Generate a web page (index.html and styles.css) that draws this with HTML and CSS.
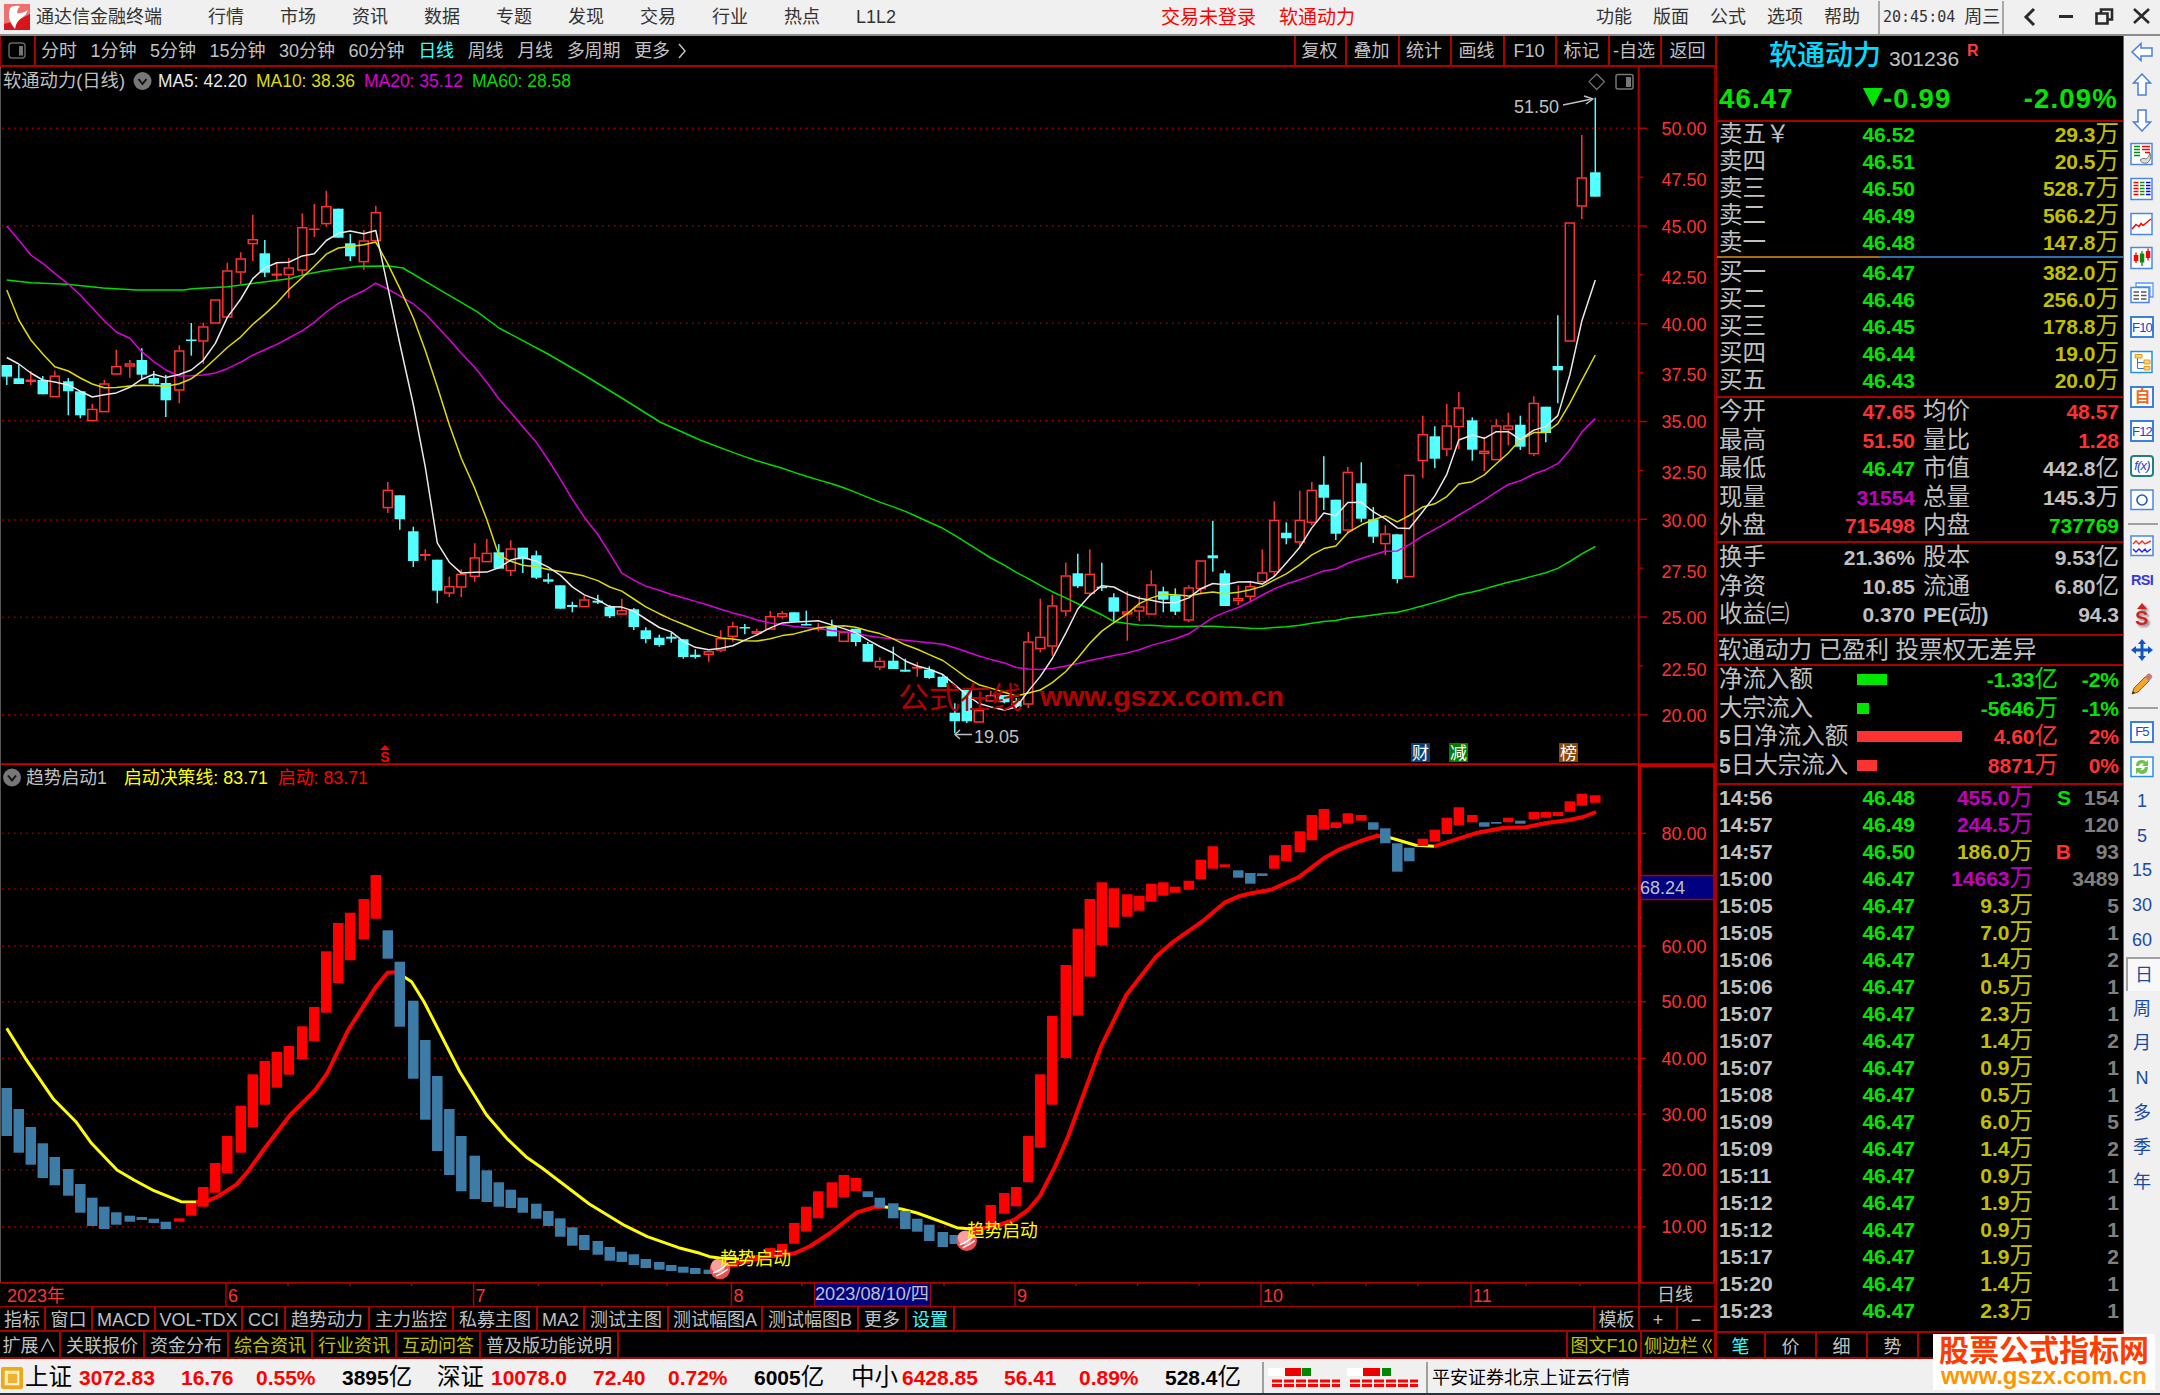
FILE: index.html
```html
<!DOCTYPE html>
<html lang="zh-CN">
<head>
    <meta charset="UTF-8">
    <title>通达信金融终端</title>
    <link rel="stylesheet" href="styles.css">
</head>
<body>
    <header class="titlebar">
        <svg class="logo" width="26" height="26" viewBox="0 0 26 26">
            <rect width="26" height="26" fill="#d8141c"/>
            <path d="M0 0H26V10Q16 16 0 20Z" fill="#f07070"/>
            <path d="M6 4Q3 14 8 21L11 25Q12 17 19 13Q23 10 24 6Q17 10 13 9Q13 5 16 2Q9 1 6 4Z" fill="#fff"/>
        </svg>
        <span class="app-name">通达信金融终端</span>
        <nav class="menu">
            <span>行情</span><span>市场</span><span>资讯</span><span>数据</span><span>专题</span><span>发现</span><span>交易</span><span>行业</span><span>热点</span><span>L1L2</span>
        </nav>
        <div class="login"><span>交易未登录</span><span>软通动力</span></div>
        <nav class="menu-right">
            <span>功能</span><span>版面</span><span>公式</span><span>选项</span><span>帮助</span>
        </nav>
        <div class="clock"><span class="time">20:45:04</span><span>周三</span></div>
        <svg class="window-buttons" width="156" height="34" viewBox="0 0 156 34" fill="none" stroke="#2a2a2a" stroke-width="3">
            <path d="M30 9L22 17L30 25"/>
            <path d="M55 16.5H69"/>
            <path d="M92.500 13.500H103.500V23.500H92.500ZM97 13V9.500H108V19.500H104" stroke-width="2.600"/>
            <path d="M130 9L145 23M145 9L130 23" stroke-width="2.600"/>
        </svg>
    </header>

    <main class="workspace">
        <section class="charts">
            <nav class="toolbar">
                <div class="pane-toggle">
                    <svg width="18" height="18" viewBox="0 0 18 18"><rect x="1" y="1" width="16" height="15" rx="3" fill="none" stroke="#666" stroke-width="1.500"/><rect x="11" y="4" width="4" height="9.500" fill="#777"/></svg>
                </div>
                <div class="periods">
                    <span>分时</span><span>1分钟</span><span>5分钟</span><span>15分钟</span><span>30分钟</span><span>60分钟</span><span class="active">日线</span><span>周线</span><span>月线</span><span>多周期</span><span>更多</span>
                    <svg width="9" height="18" viewBox="0 0 9 18"><path d="M1 2L7 9L1 16" fill="none" stroke="#c0c0c0" stroke-width="1.500"/></svg>
                </div>
                <div class="tools">
                    <span>复权</span><span>叠加</span><span>统计</span><span>画线</span><span>F10</span><span>标记</span><span>-自选</span><span>返回</span>
                </div>
            </nav>
            <svg id="kline" width="1716" height="698" viewBox="0 67 1716 698"></svg>
            <svg id="trend" width="1716" height="517" viewBox="0 765 1716 517"></svg>
            <svg id="dates" width="1716" height="24" viewBox="0 1282 1716 24"></svg>
            <nav class="tabs tabs-indicator">
                <span>指标</span><span>窗口</span><span>MACD</span><span>VOL-TDX</span><span>CCI</span><span>趋势动力</span><span>主力监控</span><span>私募主图</span><span>MA2</span><span>测试主图</span><span>测试幅图A</span><span>测试幅图B</span><span>更多</span><span class="active">设置</span><span class="fill"></span><span>模板</span><span>+</span><span>−</span>
            </nav>
            <nav class="tabs tabs-info">
                <span>扩展∧</span><span>关联报价</span><span>资金分布</span><span class="hot">综合资讯</span><span class="hot">行业资讯</span><span class="hot">互动问答</span><span>普及版功能说明</span><span class="fill"></span><span class="hot">图文F10</span><span class="hot">侧边栏<svg width="10" height="16" viewBox="0 0 10 16"><path d="M5 1L1 8L5 15M9.500 1L5.500 8L9.500 15" fill="none" stroke="#c0c000" stroke-width="1.300"/></svg></span>
            </nav>
        </section>

        <aside class="quote">
            <div class="stock"><span class="stock-name">软通动力</span><span class="stock-code">301236</span><sup>R</sup></div>
            <div class="price"><span>46.47</span><span class="change"><i></i>-0.99</span><span>-2.09%</span></div>
            <div class="block asks" id="asks"></div>
            <div class="block bids" id="bids"></div>
            <div class="block stats" id="stats"></div>
            <div class="block finance" id="finance"></div>
            <div class="notice">软通动力 已盈利 投票权无差异</div>
            <div class="block flows" id="flows"></div>
            <div class="block ticks" id="ticks"></div>
            <nav class="tabs tabs-quote"><span class="active">笔</span><span>价</span><span>细</span><span>势</span><span></span><span></span><span></span><span></span></nav>
        </aside>

        <aside class="sidebar">
            <b><svg viewBox="0 0 24 24"><path d="M2 12L11 3.500V8H22V16H11V20.500Z" class="arrow"/></svg></b>
            <b><svg viewBox="0 0 24 24"><path d="M12 1L20.500 10H16V22H8V10H3.500Z" class="arrow"/></svg></b>
            <b><svg viewBox="0 0 24 24"><path d="M12 23L20.500 14H16V2H8V14H3.500Z" class="arrow"/></svg></b>
            <b><svg viewBox="0 0 24 24"><rect x="1" y="1.500" width="21" height="21" class="box"/><path d="M4 4.500H10M4 7.500H10M4 10.500H10M4 13.500H10" stroke="#0a8a0a" stroke-width="1.500"/><path d="M12 4.500H20M12 7.500H20M15 10.500H20" stroke="#f00" stroke-width="1.500"/><path d="M20 11Q22 18 17 21Q12 22 10 18Q13 15 16 17Q19 16 20 11Z" fill="#ddd" stroke="#777"/></svg></b>
            <b><svg viewBox="0 0 24 24"><rect x="1" y="1.500" width="21" height="21" class="box"/><g stroke-width="1.700"><path d="M3.500 5.500H8.500M3.500 8.500H8.500M3.500 11.500H8.500M3.500 14.500H8.500M3.500 17.500H8.500" stroke="#f00"/><path d="M10 5.500H14.500M10 8.500H14.500M10 11.500H14.500M10 14.500H14.500M10 17.500H14.500" stroke="#0a8a0a"/><path d="M16 5.500H20.500M16 8.500H20.500M16 11.500H20.500M16 14.500H20.500M16 17.500H20.500" stroke="#00f"/></g></svg></b>
            <b><svg viewBox="0 0 24 24"><rect x="1" y="1.500" width="21" height="21" class="box"/><path d="M2 17L6 12.500L9 14.500L11 11.500L13 13.500L21 7" fill="none" stroke="#f00" stroke-width="1.500"/></svg></b>
            <b><svg viewBox="0 0 24 24"><rect x="1" y="1.500" width="21" height="21" class="box"/><path d="M6 6.500V17M18 2.500V14.500" stroke="#f00" stroke-width="1.300"/><path d="M12 5V20" stroke="#0a8a0a" stroke-width="1.300"/><rect x="3.800" y="9" width="4.500" height="6" fill="#f00"/><rect x="9.800" y="7.500" width="4.500" height="9" fill="#0a8a0a"/><rect x="15.800" y="5" width="4.500" height="7" fill="#f00"/></svg></b>
            <b><svg viewBox="0 0 24 24"><path d="M6 2H23V16H20V6H6Z" fill="#fff" stroke="#5a96f0" stroke-width="1.300"/><rect x="1" y="6.500" width="18" height="15" class="box"/><path d="M3.500 11H9M11 11H16.500M3.500 14.500H9M11 14.500H16.500M3.500 18H9M11 18H16.500" stroke="#555" stroke-width="1.300"/></svg></b>
            <b class="key">F10</b>
            <b><svg viewBox="0 0 24 24"><rect x="1" y="1.500" width="21" height="21" class="box bright"/><path d="M7.500 7V18.500H14M7.500 12.500H14" fill="none" stroke="#3c6ee0"/><path d="M5 4.500H12V8H5ZM14 10H20V14H14ZM14 16.500H20V20H14Z" fill="#ffd27a" stroke="#e89a10"/></svg></b>
            <b class="key self">自</b>
            <b class="key">F12</b>
            <b class="key fx">f(x)</b>
            <b><svg viewBox="0 0 24 24"><rect x="1" y="2" width="22" height="19.500" class="box"/><circle cx="12" cy="12" r="5" fill="#fff" stroke="#1e5bb8" stroke-width="1.600"/></svg></b>
            <hr>
            <b><svg viewBox="0 0 24 24"><rect x="1" y="2" width="22" height="19.500" class="box"/><path d="M3 10L6 7L9 10L12 7L15 10L21 7" fill="none" stroke="#f22" stroke-width="1.400"/><path d="M3 15L6 18L9 15L12 18L15 15L17 18L21 15" fill="none" stroke="#22f" stroke-width="1.400"/></svg></b>
            <b class="rsi">RSI</b>
            <b class="s-mark"><svg viewBox="0 0 24 24"><path d="M7 6L12 0L17 6Z" fill="#d02020"/><text x="5" y="21.500" font-size="20" fill="#d02020">S</text></svg></b>
            <b><svg viewBox="0 0 24 24"><path d="M12 1L16 6H13.500V10.500H18V8L23 12L18 16V13.500H13.500V18H16L12 23L8 18H10.500V13.500H6V16L1 12L6 8V10.500H10.500V6H8Z" fill="#0f55c0"/></svg></b>
            <b><svg viewBox="0 0 24 24"><path d="M2 22L4 16L15 5L19 9L8 20Z" fill="#f5a623" stroke="#8a5a20"/><path d="M15 5L18 2Q21 1 22 5L19 9Z" fill="#e86a6a" stroke="#999"/><path d="M2 22L3 19L5 21Z" fill="#333"/></svg></b>
            <hr class="wide">
            <b class="key">F5</b>
            <b><svg viewBox="0 0 24 24"><rect x="1" y="2" width="22" height="19.500" class="box bright"/><path d="M6 11Q6 5 12 5Q15 5 16 7L18 5V11H12L14 9Q10 7 9 11Z" fill="#6cc24a"/><path d="M18 12Q18 19 12 19Q9 19 8 17L6 19V13H12L10 15Q14 16 15 12Z" fill="#6cc24a"/></svg></b>
            <b>1</b><b>5</b><b>15</b><b>30</b><b>60</b><b class="selected">日</b><b>周</b><b>月</b><b>N</b><b>多</b><b>季</b><b>年</b>
        </aside>
    </main>

    <footer class="status">
        <svg width="22" height="22" viewBox="0 0 22 22"><rect width="22" height="22" rx="2" fill="#f0a818"/><rect x="4.500" y="4.500" width="13" height="13" fill="#ffe9a0" stroke="#fff8dc" stroke-width="1.500"/><rect x="7" y="7" width="9" height="9" fill="#f2b030"/></svg>
        <div class="index index-sh"><span>上证</span><em>3072.83</em><em>16.76</em><em>0.55%</em><strong>3895<i>亿</i></strong></div>
        <div class="index index-sz"><span>深证</span><em>10078.0</em><em>72.40</em><em>0.72%</em><strong>6005<i>亿</i></strong></div>
        <div class="index index-zx"><span>中小</span><em>6428.85</em><em>56.41</em><em>0.89%</em><strong>528.4<i>亿</i></strong></div>
        <div class="breadth">
            <svg width="156" height="26" viewBox="0 0 156 26">
                <rect x="4" y="4" width="17" height="8" fill="#fff"/><rect x="21" y="4" width="16" height="8" fill="#e00"/><rect x="38" y="4" width="9" height="8" fill="#080"/>
                <rect x="83" y="4" width="16" height="8" fill="#fff"/><rect x="99" y="4" width="17" height="8" fill="#e00"/><rect x="118" y="4" width="9" height="8" fill="#080"/>
                <path d="M8 17H76M86 17H154M8 21.500H76M86 21.500H154" stroke="#f00" stroke-width="3" stroke-dasharray="10 2"/>
            </svg>
        </div>
        <span class="server">平安证券北京上证云行情</span>
    </footer>

    <div class="stamp"><strong>股票公式指标网</strong><span>www.gszx.com.cn</span></div>
    <script src="charts.js"></script>
</body>
</html>
```
FILE: styles.css
```css
* {
    box-sizing: border-box;
    margin: 0;
    padding: 0;
}
body {
    width: 2160px;
    height: 1395px;
    overflow: hidden;
    position: relative;
    background: #000;
    color: #c0c0c0;
    font-family: "Liberation Sans", "Noto Sans CJK SC", sans-serif;
    font-size: 18px;
    line-height: 1;
    white-space: nowrap;
}
i, em {
    font-style: normal;
}

/* title bar */
.titlebar {
    height: 36px;
    display: flex;
    align-items: center;
    background: #f0f0f0;
    border-bottom: 2px solid #8c8c8c;
    color: #333;
}
.logo {
    margin-left: 4px;
}
.app-name {
    width: 172px;
    margin-left: 6px;
}
.menu {
    display: flex;
    gap: 36px;
    width: 953px;
}
.login {
    display: flex;
    gap: 23px;
    width: 435px;
    font-size: 19px;
    color: #f00;
}
.menu-right {
    display: flex;
    gap: 21px;
    width: 282px;
}
.clock {
    height: 33px;
    display: flex;
    align-items: center;
    gap: 9px;
    width: 126px;
    padding-left: 3px;
    border-left: 2px solid #a8a8a8;
    border-right: 2px solid #a8a8a8;
}
.time {
    font-family: "DejaVu Sans Mono", monospace;
    font-size: 15px;
}

/* main area */
.workspace {
    height: 1323px;
    display: grid;
    grid-template-columns: 1716px 408px 36px;
}
.charts {
    display: flex;
    flex-direction: column;
}
.charts svg {
    display: block;
}
.toolbar {
    height: 31px;
    display: flex;
    border-bottom: 2px solid #a00;
    border-right: 1px solid #a00;
}
.pane-toggle {
    width: 36px;
    padding: 6px 0 0 7px;
    border-left: 1px solid #a00;
    border-right: 2px solid #a00;
}
.periods {
    flex: 1;
    display: flex;
    align-items: center;
    gap: 13.500px;
    padding-top: 1px;
    padding-left: 5px;
}
.periods svg {
    margin-left: -6px;
}
.active {
    color: #3ff;
}
.tools {
    display: grid;
    grid-template-columns: 51px 53px 52px 53px 52px 53px 52px 55px;
}
.tools span {
    display: flex;
    align-items: center;
    justify-content: center;
    padding: 1px 2px 0 0;
    border-left: 2px solid #a00;
}
.tabs {
    display: grid;
}
.tabs span {
    display: flex;
    align-items: center;
    justify-content: center;
    padding-top: 3px;
    border-right: 2px solid #a00;
}
.tabs .hot {
    color: #c0c000;
}
.tabs .hot svg {
    margin-left: 4px;
}
.tabs-indicator {
    height: 26px;
    border-top: 1px solid #a00;
    border-bottom: 2px solid #a00;
    grid-template-columns: 46px 47px 63px 87px 43px 84px 84px 84px 47px 84px 94px 96px 48px 48px 1fr 45px 38px 38px;
}
.tabs-info {
    height: 27px;
    border-bottom: 2px solid #a00;
    grid-template-columns: 61px 84px 84px 84px 84px 84px 138px 1fr 74px 74px;
}

/* chart labels */
.up {
    fill: #ff3232;
}
.watermark {
    fill: #b40000;
}

/* quote panel */
.quote {
    display: flex;
    flex-direction: column;
    border-left: 1px solid #a00;
    border-right: 1px solid #666;
}
.stock {
    height: 37px;
    padding: 3px 0 0 52px;
    display: flex;
    align-items: center;
}
.stock-name {
    font-size: 28px;
    font-weight: 500;
    color: #00dcff;
}
.stock-code {
    font-size: 21px;
    margin: 4px 8px 0;
}
.stock sup {
    font-size: 16px;
    font-weight: bold;
    color: #ff3c3c;
    margin-top: -10px;
}
.price {
    height: 47px;
    padding: 12px 5px 0 2px;
    display: flex;
    justify-content: space-between;
    font-size: 27.500px;
    font-weight: bold;
    letter-spacing: 1.200px;
    color: #00e600;
}
.change {
    display: flex;
    margin-left: -3px;
}
.change i {
    width: 20px;
    height: 19px;
    margin-top: 3px;
    background: #00e600;
    clip-path: polygon(0 0, 100% 0, 50% 100%);
}
.block {
    border-top: 2px solid #a00;
    font-size: 21px;
    font-weight: bold;
    line-height: 27px;
}
.block .zh {
    font-size: 23.500px;
    font-weight: normal;
    line-height: 1;
}
.asks {
    height: 136px;
    line-height: 25px;
}
.bids {
    height: 140px;
    padding-top: 1px;
    border-image: linear-gradient(90deg, #a86c10 40%, #2870b0 40%) 1;
}
.stats {
    height: 145px;
}
.finance {
    height: 93px;
    padding-top: 1px;
}
.flows {
    height: 119px;
}
.stats, .finance, .flows {
    line-height: 28px;
}
.ticks {
    flex: 1;
    line-height: 25px;
}
.notice {
    height: 30px;
    border-top: 2px solid #a00;
    padding: 3px 0 0 1px;
    font-size: 23.500px;
}
.row {
    display: grid;
    grid-template-columns: 76px 120px 8px 86px 1fr;
    padding: 0 4px 0 2px;
    height: 27px;
}
.stats .row, .finance .row, .flows .row {
    height: 28.500px;
}
.row > * {
    text-align: right;
    white-space: nowrap;
}
.row > .l {
    text-align: left;
}
.flows .row {
    grid-template-columns: 138px 107px 94px 1fr;
}
.bar {
    height: 11px;
    margin-top: 8px;
    background: currentColor;
}
.ticks .row {
    grid-template-columns: 76px 120px 118px 38px 1fr;
}
.g { color: #00e600; }
.r { color: #ff3232; }
.y { color: #c0c000; }
.m { color: #c000c0; }
.d { color: #808080; }
.tabs-quote {
    height: 28px;
    border-top: 2px solid #a00;
    border-bottom: 2px solid #a00;
    grid-template-columns: 49px repeat(7, 51px);
}

/* icon bar */
.sidebar {
    background: #f0f0f0;
    display: flex;
    flex-direction: column;
    color: #1a4aa0;
    font-size: 18px;
}
.sidebar b {
    height: 34.600px;
    flex-shrink: 0;
    display: flex;
    align-items: center;
    justify-content: center;
    font-weight: normal;
}
.sidebar b:first-child {
    height: 32px;
}
.sidebar svg {
    width: 24px;
    height: 24px;
}
.arrow {
    fill: #fff;
    stroke: #4a7ee0;
    stroke-width: 1.500;
}
.box {
    fill: #fff;
    stroke: #4a86e8;
    stroke-width: 1.500;
}
.bright {
    stroke: #2090e8;
}
.sidebar hr {
    height: 2px;
    flex-shrink: 0;
    border: 0;
    background: #a0a0a0;
    margin: 5px 2px 4px 4px;
}
.sidebar .wide {
    margin: 5px 2px 6px 4px;
}
.sidebar .key {
    width: 24px;
    height: 22px;
    margin: 6.300px auto;
    border: 2px solid #3a80e0;
    background: #fff;
    color: #2343d0;
    font-size: 13px;
    letter-spacing: -0.800px;
}
.sidebar .self {
    color: #f06a20;
    font-size: 16px;
    font-weight: bold;
}
.sidebar .fx {
    border-color: #208080;
    border-radius: 4px;
    font-style: italic;
}
.sidebar .rsi {
    font-size: 14.500px;
    font-weight: bold;
    color: #3838d8;
    letter-spacing: -0.700px;
}
.sidebar .s-mark {
    font-weight: bold;
    filter: drop-shadow(2px 2px 1px #888);
}
.sidebar .selected {
    background: #f8f8f8;
    border-left: 2px solid #a0a0a0;
    border-top: 2px solid #a0a0a0;
    margin-left: 2px;
}

/* status bar */
.status {
    height: 36px;
    display: flex;
    align-items: center;
    padding-top: 3px;
    background: #f0f0f0;
    border-bottom: 2px solid #1c3448;
    color: #000;
}
.status > svg {
    margin: 0 2px 0 1px;
}
.index {
    display: grid;
    grid-template-columns: 54px 102px 75px 86px 1fr;
    font-size: 21px;
    font-weight: bold;
}
.index-sh {
    width: 412px;
}
.index-sz {
    width: 414px;
}
.index-zx {
    width: 411px;
    grid-template-columns: 51px 102px 75px 86px 1fr;
}
.index span, .index i {
    font-size: 23.500px;
    font-weight: normal;
}
.index em {
    color: #f00;
}
.index > * {
    align-self: center;
}
.breadth {
    width: 166px;
    border-left: 2px solid #a0a0a0;
    border-right: 2px solid #a0a0a0;
    height: 31px;
    padding-top: 2px;
}
.server {
    margin-left: 4px;
}

/* site stamp over the corner */
.stamp {
    position: absolute;
    left: 1933px;
    top: 1334px;
    width: 222px;
    height: 56px;
    background: #fff;
    text-align: center;
    display: flex;
    flex-direction: column;
}
.stamp strong {
    font-size: 30px;
    line-height: 33px;
    color: #ff3c00;
}
.stamp span {
    font-size: 24px;
    font-weight: bold;
    line-height: 18px;
    color: #ff9600;
}
```
FILE: charts.js
```js
// chart drawing, all coordinates are window pixels

// r = up day (hollow), c = down day (filled): [kind, high, top, bottom, low]
const candles = [
    ['c',365,365,376.7,385],['c',365,378.3,384,384],['r',371,379.5,382,385],['c',376,380,394.3,394.3],['r',370.7,375.5,397.3,397.3],
    ['c',378,381.3,391.3,415.3],['c',391.3,391.3,415.3,418.3],['r',404,408.7,421.3,421.3],['r',380,383.3,412.3,412.3],['r',349.7,366,374.7,374.7],
    ['r',360,363.3,366.7,377.7],['c',348.3,360,374.7,380],['c',371,378,383.7,386],['c',375,383,400.3,417],['r',345.3,350.3,390.7,403.3],
    ['c',323,339.5,341,355.7],['r',322.7,326.3,341.7,364],['r',299.3,299.3,323.7,323.7],['r',262.7,270.3,317.7,317.7],['r',252.3,258.3,272.7,284],
    ['r',214.7,239,244.3,261],['c',240,253.3,272.7,277],['r',262,273.5,275.7,280],['r',258,267.3,275.3,298.3],['r',213.3,227,270.7,275],
    ['r',204,228.5,229.5,237],['r',190.7,206,224.3,226.7],['c',208.7,208.7,237.7,237.7],['c',234,243.3,256.3,261],['r',230,240.3,262.3,269.7],
    ['r',205.7,212,241.3,241.3],['r',482,489.7,508.3,513],['c',495.3,495.3,519.3,529.7],['c',526.7,531.3,561,567],['r',549.3,554,556,560.7],
    ['c',559.7,559.7,590.7,603.3],['r',576.7,586,593.7,597],['r',569.3,573.7,587.7,597],['r',543.3,557.3,577,581.7],['r',539,552.7,562.3,562.3],
    ['c',544.3,552.3,568.7,568.7],['r',540.3,548.3,571.3,576],['c',547.7,547.7,559.3,573],['c',550.7,555.3,577.7,579],['c',573.3,579.3,581.7,583.7],
    ['c',585.3,585.3,608.7,608.7],['c',601.7,605,607,612.3],['r',596,599.3,607.3,607.3],['c',594.7,600.7,602.7,604],['c',605,606.7,616.3,618],
    ['r',598.7,610,614.7,614.7],['c',608,609.3,627,630],['c',627.3,630.3,639,643.3],['c',634.7,637.7,645,646.7],['c',632.7,636.7,638.7,642.7],
    ['c',639.3,639.3,657,658.7],['c',649.3,654.7,657,658.7],['r',651,651,655,661.7],['r',630.3,638,650.7,652.3],['r',621.7,626,637,641.7],
    ['c',624,627,628.3,634.3],['r',628.7,631,634,636],['r',611,616,629.7,629.7],['r',611,613,617.3,618.7],['c',612.3,612.3,621.7,621.7],
    ['c',610.7,624,625.3,625.3],['r',623,628,629.3,631.3],['c',619.7,626.7,636.3,636.3],['r',631.7,631.7,642,642],['c',628.7,628.7,642,646.3],
    ['c',642,644,661.7,661.7],['r',657.3,660.7,667.7,670.3],['c',646.7,660.7,669,669],['c',658.7,669.7,671.7,671.7],['r',662,666.7,668.7,676.7],
    ['c',666.3,669.7,678,679],['c',674.3,676.7,687,687],['c',703.3,712.7,721.3,733.3],['c',689,689,721.3,723],['r',708,710,722.7,722.7],
    ['r',690.7,695,701.7,701.7],['c',695,695,702.3,703.3],['c',698,701,706.7,708],['r',632,641.3,704.7,708],['r',598.7,636.7,649.3,652.3],
    ['r',594.7,605.3,646.7,655.7],['r',562.7,575.3,611.7,616.3],['c',553.7,573.3,586.3,588],['r',549.3,573.7,594,596],['c',562.7,586.7,588,591],
    ['c',593.3,597.3,611.7,623.3],['r',591.3,611.3,614.7,640.7],['r',596,606.3,611.7,621],['r',570.3,584.3,614.7,614.7],['c',586.7,591.3,599.7,612.3],
    ['c',588.3,595.3,611.7,615],['r',585.3,587.3,620.7,622.3],['r',560.3,560.3,589.3,594.3],['c',520.7,555.3,558.3,571.7],['c',570.3,573.3,606,606],
    ['r',585.3,598,601.3,605],['r',582.3,586,597,601.7],['r',549.3,572.3,582.3,582.3],['r',501.3,519.7,572.3,576],['c',522.3,532.7,538.3,544.3],
    ['r',490.7,519.7,542.7,547],['r',482,489.7,523,525.3],['c',456.3,484.7,497.7,510],['c',499.7,499.7,533.7,540],['r',467,471.7,530.7,533.3],
    ['c',462.3,483.3,518.7,522.3],['c',507,519.3,536.7,543],['r',525.3,533.3,544.3,555],['c',534.3,534.3,579,583.3],['r',474.7,474.7,577.3,577.3],
    ['r',415.7,434,461.3,478.3],['c',426.3,436.3,458.7,468.3],['r',404,425.3,449.7,456.3],['r',392,407.3,427.3,449.3],['c',417.3,420.3,449.7,460.7],
    ['r',436.7,450.7,454,471],['r',419,425.3,460.3,460.3],['r',412.7,425.3,430,445.3],['c',415.7,424.7,446.7,450],['r',396.3,402.7,454.3,456],
    ['c',406.7,406.7,433,442.3],['c',315.3,366,370.3,403.3],['r',222.3,222.3,341.7,341.7],['r',135,177.3,206.7,219],['c',97.7,172.3,196.7,196.7]
];

// indicator bars: [top, bottom]
const bars = [
    [1088,1136],[1109,1152.7],[1127,1164.7],[1143.3,1178],[1157,1185.3],[1169,1195.7],[1184,1212.7],[1197.7,1226],[1206.7,1229],[1212.3,1224.7],
    [1215.7,1221.7],[1217,1220],[1218.7,1223],[1221.7,1229],[1218.3,1221.7],[1203.3,1215.7],[1187,1206.7],[1163,1192.7],[1136,1173.3],[1105.7,1152.7],
    [1074.3,1127],[1061,1104.7],[1052,1087.7],[1046,1074.7],[1026.3,1059.3],[1007,1041.3],[951.3,1012.7],[923,983],[912.7,960.3],[899,939.3],
    [875,918.7],[930.3,958.7],[961.7,1026.7],[1000.7,1078.7],[1040,1119.7],[1076,1151],[1109,1175],[1136,1191.3],[1155.7,1199],[1170.3,1202],
    [1182.3,1206.7],[1189.7,1208],[1197.7,1212.7],[1203.7,1218.7],[1211,1226],[1218.3,1236.7],[1227.3,1245.7],[1235,1250],[1241,1254.7],[1247,1260.7],
    [1251.7,1262],[1254.3,1265],[1259,1268],[1262,1269.7],[1265,1271],[1266.7,1272.7],[1268,1274],[1269.7,1274],[1270,1273],[1262,1267],
    [1259,1264],[1255,1261],[1248,1258],[1244,1256],[1223,1243.7],[1206.7,1231.7],[1191.3,1218.3],[1182.3,1207.7],[1175,1197.3],[1178,1191],
    [1191.3,1197],[1197.7,1207.7],[1203.3,1218.3],[1211,1229],[1218.7,1231.7],[1224.7,1241],[1232,1247],[1235,1244],[1236,1243],[1226,1234],
    [1205,1226],[1193,1213.7],[1187,1206.3],[1136,1182.3],[1074.3,1147.7],[1016,1104.7],[965,1058],[928.7,1015.7],[899,976.7],[882.3,945.3],
    [888.3,927.3],[894.3,916.7],[895.7,910.7],[883.7,901.7],[882.3,895.7],[886.7,892.7],[880.7,889.7],[859.7,879],[846.3,868.7],[864.3,867],
    [870.3,877.7],[873,883.7],[873.3,876],[855.3,868.7],[845,861.3],[831.3,852.3],[815,840.3],[809,829.7],[822.3,828],[813.3,823.7],
    [815,820.7],[822.3,829.7],[828.3,843.3],[843.3,871.7],[847.7,861.3],[838.7,846],[829.7,841.7],[817.7,834],[807.3,825.3],[815,822.3],
    [822.3,826.7],[822,823.7],[817.7,822.3],[820.7,823.7],[812,819.3],[812,817.7],[812,816],[801.3,811.7],[793.7,805.7],[795.3,802.7]
];
const falling = i => i < 14 || (i > 30 && i < 59) || (i > 69 && i < 79) || (i > 99 && i < 103) || (i > 110 && i < 115) || i == 120 || i == 121 || i == 123;

const RED = '#ff3232', CYAN = '#54ffff', LINE = '#b00000';
const X = i => 6.8 + 1.5 * Math.floor(8.2093 * i + 0.1);
const rect = (x, y, w, h, fill, extra = '') => `<rect x="${x}" y="${y}" width="${w}" height="${h}" fill="${fill}" ${extra}/>`;
const line = (x1, y1, x2, y2, c, w = 1.5, extra = '') => `<path d="M${x1} ${y1}L${x2} ${y2}" stroke="${c}" stroke-width="${w}" fill="none" ${extra}/>`;
const poly = (pts, c, w = 1.5) => `<polyline points="${pts.map(p => p.join(',')).join(' ')}" fill="none" stroke="${c}" stroke-width="${w}" stroke-linejoin="round"/>`;
const text = (x, y, s, c, size = 18, len = 0, extra = '') => `<text x="${x}" y="${y}" fill="${c}" font-size="${size}" ${len ? `textLength="${len}" lengthAdjust="spacingAndGlyphs"` : ''} ${extra}>${s}</text>`;
const grid = y => line(2, y, 1637, y, '#a00000', 1.5, 'stroke-dasharray="1.5 4.5"');
const toggle = (x, y) => `<circle cx="${x}" cy="${y}" r="9" fill="#777"/><path d="M${x - 4} ${y - 2}L${x} ${y + 3}L${x + 4} ${y - 2}" fill="none" stroke="#111" stroke-width="2"/>`;

// moving averages, the first days come from before the visible range
function ma(n, head) {
    const close = candles.map(c => c[0] == 'r' ? c[2] : c[3]);
    const pts = head.slice();
    for (let i = n - 1; i < close.length; i++) {
        let sum = 0;
        for (let k = 0; k < n; k++) sum += close[i - k];
        pts.push([X(i), (sum / n).toFixed(1)]);
    }
    return pts;
}
const days = ys => ys.map((y, i) => [X(i), y]);

function drawKline() {
    let s = '';
    [128.3, 225.7, 323.3, 420.7, 520, 617.3, 714.7].forEach(y => s += grid(y));
    candles.forEach(([k, hi, top, bot, lo], i) => {
        const x = X(i);
        if (k == 'c') {
            s += line(x, hi, x, lo, CYAN);
            s += rect(x - 5.25, top, 10.5, Math.max(bot - top, 1.5), CYAN);
        } else if (bot - top < 3) {
            s += line(x, hi, x, lo, RED) + rect(x - 5.25, top, 10.5, Math.max(bot - top, 1.5), RED);
        } else {
            s += line(x, hi, x, top, RED) + line(x, bot, x, lo, RED);
            s += rect(x - 4.5, top + .7, 9, bot - top - 1.4, 'none', `stroke="${RED}" stroke-width="1.5"`);
        }
    });
    s += poly(ma(60, [[6.7,280],[31,282.7],[67,284.3],[103,288],[137,290],[184,290],[192,288.7],[228,286.7],[258,282.7],[289,278.7],[307,274],[329,270],[359,266.3],[389,266],[403,268],[439,289.3],[477,311.7],[499,328],[548,354],[584,375],[625,400],[660,422],[700,440]]), '#00dc00');
    s += poly(ma(20, days([226,240,255,263.3,273.3,284,295,308,320.7,332,338.3,351.7,361.7,370,376,375.7,375,373,368.7])), '#dc00dc');
    s += poly(ma(10, days([290,320,340,354,366.7,371,378,384,387.7])), '#dcdc00');
    s += poly(ma(5, days([357.5,364,373,380])), '#e8e8e8');
    s += text(898, 708, '公式在线', '', 30, 124, 'class="watermark"');
    s += text(1040, 706, 'www.gszx.com.cn', '', 28, 244, 'class="watermark" font-weight="bold"');
    // extremes
    s += text(1514, 113, '51.50', '#c0c0c0', 18, 45) + poly([[1563,105],[1592,99]], '#c0c0c0') + poly([[1584,96],[1593,99],[1586,104]], '#c0c0c0');
    s += text(974, 743, '19.05', '#c0c0c0', 18, 45) + poly([[972,734.5],[955,734.5]], '#c0c0c0') + poly([[960,730],[955,734.5],[960,739]], '#c0c0c0');
    s += poly([[1596.7,74],[1604.5,81.700],[1596.7,89.500],[1589,81.700],[1596.7,74]], '#777', 1.2);
    s += rect(1616, 74.5, 17, 14.5, 'none', 'rx="2" stroke="#777" stroke-width="1.5"') + rect(1626, 77, 5, 10, '#777');
    // event marks
    s += '<path d="M380 750L385 745L390 750Z" fill="#f00"/>' + text(380.3, 762, 'S', '#f00', 14, 0, 'font-weight="bold"');
    [[1411,'财','#0a4078'],[1449,'减','#008000'],[1559,'榜','#904800']].forEach(([x, t, c]) => {
        s += rect(x, 743, 19, 19, c) + text(x + 1, 759, t, '#fff', 17);
    });
    // legend
    s += text(3, 87, '软通动力(日线)', '#c0c0c0', 18, 122) + toggle(142.5, 81);
    s += text(158, 87, 'MA5: 42.20', '#e8e8e8', 18, 89) + text(256, 87, 'MA10: 38.36', '#dcdc00', 18, 99);
    s += text(364, 87, 'MA20: 35.12', '#dc00dc', 18, 99) + text(472, 87, 'MA60: 28.58', '#00dc00', 18, 99);
    // price axis
    [128,179.5,226,277,324,374.5,421.5,472,520.5,571,617.5,669,715.5].forEach((y, i) => {
        s += text(1661.5, y + 6.5, (50 - i * 2.5).toFixed(2), '', 18, 45, 'class="up"');
        const ty = 128.3 + i * 48.87;
        s += line(1639, ty, i % 2 ? 1643 : 1647, ty, LINE);
    });
    s += line(1638.7, 67, 1638.7, 765, LINE, 2) + line(1715, 67, 1715, 765, LINE) + line(0, 764.3, 1716, 764.3, '#c80000', 2);
    s += line(.5, 67, .5, 765, '#555', 1);
    document.getElementById('kline').innerHTML = s;
}

function drawTrend() {
    let s = '';
    [833.3, 889, 946, 1001.7, 1058.3, 1114, 1169.7, 1226.7].forEach(y => s += grid(y));
    const Y = '#ffff00', R = '#ff0000';
    s += poly([[6.7,1028.3],[25.4,1058.3],[53.6,1099.3],[75.9,1121.7],[91.5,1143.3],[117,1170],[134,1180],[154,1190.7],[181,1201.7],[198,1202]], Y, 3);
    s += poly([[196,1202],[207.6,1201],[218.8,1196],[236.6,1184.3],[247.8,1171.7],[263.4,1150],[290.2,1115],[314.7,1090.7],[326.8,1074],[348.2,1030],[375,988.3],[387.5,972.7],[400,972]], R, 4);
    s += poly([[398,973],[404,976.7],[411.6,981.7],[424,1001.7],[459.8,1071.7],[486.6,1115],[506.7,1138.3],[525.9,1156.7],[542.4,1168.3],[589.3,1204],[625,1225.7],[647.3,1236.7],[678.6,1247.7],[700,1253.3],[709.7,1256.7],[719.5,1258],[739,1259]], Y, 3);
    s += poly([[728,1265],[745,1261],[765,1257],[794.7,1253.3],[810.5,1246],[830,1233.3],[844,1222.3],[857,1212.3],[873.8,1207.3],[883.6,1206.7]], R, 4);
    s += poly([[883.6,1206.7],[901.4,1209],[917.2,1213],[941,1221.7],[956.8,1227.7],[974,1229.3]], Y, 3);
    s += poly([[972,1230],[996.3,1226],[1014,1220],[1028,1210],[1040,1196],[1055,1166.7],[1068,1136.7],[1101,1046.7],[1126.3,995],[1156,956.7],[1172,942.7],[1202,921.7],[1225,902.3],[1238.8,896.3],[1252.5,893],[1271,889.7],[1298.5,877.3],[1323.7,858.3],[1339.8,849.3],[1360.5,841],[1376.5,836],[1384,836]], R, 4);
    s += poly([[1384,836],[1390.3,837.7],[1415.6,845.3],[1434,846.3]], Y, 3);
    s += poly([[1434,846.3],[1450,841.3],[1477.5,832.7],[1502.8,828],[1525.8,827.3],[1546.4,823],[1569.4,820],[1583,817],[1596,812]], R, 4);
    bars.forEach(([a, b], i) => s += rect(X(i) - 5.25, a, 10.5, (b - a).toFixed(1), falling(i) ? '#3e7ca8' : '#ff0000'));
    // start signals
    [[720,1269,1265],[966.7,1240.7,1236.5]].forEach(([x, y, ty]) => {
        s += `<circle cx="${x}" cy="${y}" r="10.300" fill="#e85050"/><circle cx="${x - 2}" cy="${y - 3}" r="7" fill="#f6a0a0"/>`;
        s += `<path d="M${x - 7} ${y + 4}Q${x} ${y + 2} ${x + 8} ${y - 6}M${x - 4} ${y + 7}Q${x + 3} ${y + 4} ${x + 8} ${y}" fill="none" stroke="#fff" stroke-width="1.500"/>`;
        s += text(x, ty, '趋势启动', '#ffff00', 18, 71);
    });
    s += toggle(12, 777.5) + text(26, 784, '趋势启动1', '#c0c0c0', 18, 81) + text(124, 784, '启动决策线: 83.71', '#ffff00', 18, 144) + text(278, 784, '启动: 83.71', '#ff0000', 18, 90);
    // value axis
    [[80,833.3],[60,946],[50,1001.7],[40,1058.3],[30,1114],[20,1169.7],[10,1226.7]].forEach(([v, y]) => {
        s += line(1640, y, 1646, y, LINE) + text(1661.5, y + 6.5, v + '.00', '', 18, 45, 'class="up"');
    });
    [861.5, 917.5, 974, 1030, 1086, 1142, 1198].forEach(y => s += line(1640, y, 1642, y, LINE));
    s += line(1639.5, 765, 1639.5, 1282, '#c80000', 3) + line(1714.5, 765, 1714.5, 1282, '#c80000', 2.500) + line(1640, 766, 1715, 766, '#c80000', 2);
    s += rect(1640, 875.5, 74, 24, '#000080', 'stroke="#b00000" stroke-width="1.500"') + text(1640, 893.5, '68.24', '#c0c0c0', 18, 45);
    s += line(.5, 765, .5, 1282, '#555', 1);
    document.getElementById('trend').innerHTML = s;
}

function drawDates() {
    let s = line(0, 1282.7, 1716, 1282.7, LINE, 2);
    s += text(7, 1301.5, '2023年', '', 18, 58, 'class="up"');
    [[226,'6'],[473.6,'7'],[731.4,'8'],[1015,'9'],[1261,'10'],[1471,'11']].forEach(([x, m]) => {
        s += line(x, 1282, x, 1306, LINE) + text(x + 2, 1301.5, m, '', 18, 0, 'class="up"');
    });
    [288,350,411.6,538.4,602,667,801.8,944,1076,1137.5,1199,1313,1366,1418,1526,1580].forEach(x => s += line(x, 1282, x, 1286, LINE));
    s += rect(814.5, 1283, 116, 23, '#000080', 'stroke="#b00000"') + text(815, 1300, '2023/08/10/四', '#c0c0c0', 18, 114);
    s += line(1639, 1282, 1639, 1306, LINE) + line(1715, 1282, 1715, 1306, LINE) + text(1657, 1301, '日线', '#c0c0c0', 18, 36);
    document.getElementById('dates').innerHTML = s;
}

// quote panel
const zh = s => String(s).replace(/[\u3200-\u9fff￥]+/g, '<i class="zh">$&</i>');
const cell = (s, cls = '') => `<span class="${cls}">${zh(s)}</span>`;
const fill = (id, rows) => document.getElementById(id).innerHTML = rows.map(r => `<div class="row">${r.join('')}</div>`).join('');
const level = ([n, p, v]) => [cell(n, 'l'), cell(p, 'g'), cell(''), cell(''), cell(v, 'y')];
const pair = ([a, b, bc, c, d, dc]) => [cell(a, 'l'), cell(b, bc), cell(''), cell(c, 'l'), cell(d, dc)];

fill('asks', [['卖五￥','46.52','29.3万'],['卖四','46.51','20.5万'],['卖三','46.50','528.7万'],['卖二','46.49','566.2万'],['卖一','46.48','147.8万']].map(level));
fill('bids', [['买一','46.47','382.0万'],['买二','46.46','256.0万'],['买三','46.45','178.8万'],['买四','46.44','19.0万'],['买五','46.43','20.0万']].map(level));
fill('stats', [
    ['今开','47.65','r','均价','48.57','r'],
    ['最高','51.50','r','量比','1.28','r'],
    ['最低','46.47','g','市值','442.8亿',''],
    ['现量','31554','m','总量','145.3万',''],
    ['外盘','715498','r','内盘','737769','g']
].map(pair));
fill('finance', [
    ['换手','21.36%','','股本','9.53亿',''],
    ['净资','10.85','','流通','6.80亿',''],
    ['收益㈢','0.370','','PE(动)','94.3','']
].map(pair));
fill('flows', [
    ['净流入额',30,'g','-1.33亿','-2%'],
    ['大宗流入',12,'g','-5646万','-1%'],
    ['5日净流入额',105,'r','4.60亿','2%'],
    ['5日大宗流入',20,'r','8871万','0%']
].map(([n, w, c, v, p]) => [cell(n, 'l'), `<div class="bar ${c}" style="width:${w}px"></div>`, cell(v, c), cell(p, c)]));
fill('ticks', [
    ['14:56','46.48','455.0万','m','S','154'],['14:57','46.49','244.5万','m','','120'],['14:57','46.50','186.0万','y','B','93'],
    ['15:00','46.47','14663万','m','','3489'],['15:05','46.47','9.3万','y','','5'],['15:05','46.47','7.0万','y','','1'],
    ['15:06','46.47','1.4万','y','','2'],['15:06','46.47','0.5万','y','','1'],['15:07','46.47','2.3万','y','','1'],
    ['15:07','46.47','1.4万','y','','2'],['15:07','46.47','0.9万','y','','1'],['15:08','46.47','0.5万','y','','1'],
    ['15:09','46.47','6.0万','y','','5'],['15:09','46.47','1.4万','y','','2'],['15:11','46.47','0.9万','y','','1'],
    ['15:12','46.47','1.9万','y','','1'],['15:12','46.47','0.9万','y','','1'],['15:17','46.47','1.9万','y','','2'],
    ['15:20','46.47','1.4万','y','','1'],['15:23','46.47','2.3万','y','','1']
].map(([t, p, v, c, m, n]) => [cell(t, 'l'), cell(p, 'g'), cell(v, c), cell(m, m == 'B' ? 'r' : 'g'), cell(n, 'd')]));

drawKline();
drawTrend();
drawDates();
```
